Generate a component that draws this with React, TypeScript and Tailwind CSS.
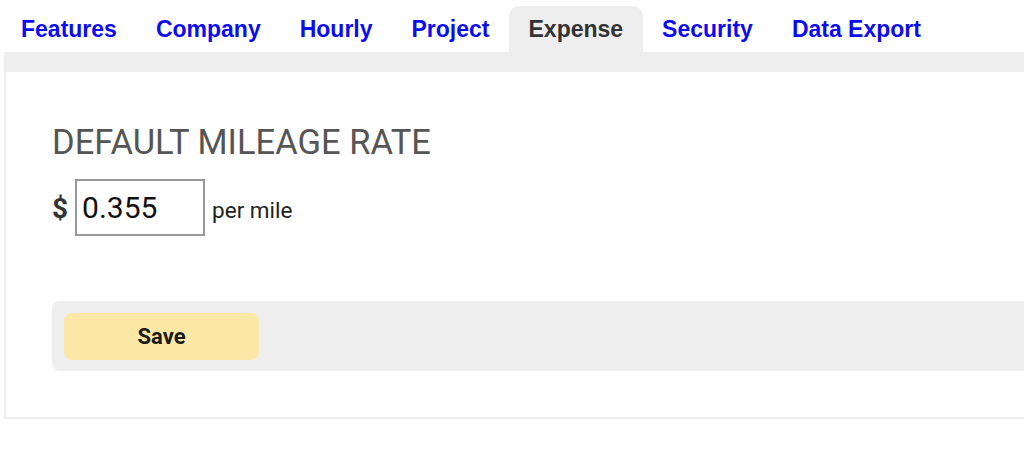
import React from "react";

const tabs = ["Features", "Company", "Hourly", "Project", "Expense", "Security", "Data Export"];

export default function App() {
  return (
    <div className="w-full h-[465px] bg-white overflow-hidden" style={{ fontFamily: "Roboto, 'Liberation Sans', sans-serif" }}>
      <div className="flex pt-[6px] pl-[1.5px]">
        {tabs.map((t) => (
          <div
            key={t}
            className={
              t === "Expense"
                ? "h-[46px] flex items-center px-[19.5px] rounded-t-[10px] bg-[#eeeeee] text-[#333333] font-bold text-[23px] font-['Liberation_Sans',Arial,sans-serif] leading-none"
                : "h-[46px] flex items-center px-[19.5px] text-[#0c0cf2] font-bold text-[23px] font-['Liberation_Sans',Arial,sans-serif] leading-none"
            }
          >
            {t}
          </div>
        ))}
      </div>
      <div className="ml-[4px] w-[1100px] border-2 border-t-[20px] border-[#eeeeee] pl-[46px] pt-[51px] pb-[46px]">
        <h2 className="text-[34.5px] leading-[39px] font-normal text-[#555555]">DEFAULT MILEAGE RATE</h2>
        <div className="flex items-baseline mt-[17px]">
          <span className="text-[28px] font-bold text-[#333333]">$</span>
          <input
            defaultValue="0.355"
            className="ml-[7px] w-[130px] h-[57px] border-2 border-[#999999] pl-[5px] text-[30px] text-[#111111] outline-none"
            style={{ fontFamily: "Roboto, sans-serif" }}
          />
          <span className="ml-[7px] text-[22.5px] text-[#222222]">per mile</span>
        </div>
        <div className="mt-[65px] h-[70px] bg-[#eeeeee] rounded-l-[8px] pl-[12px] pt-[12px]">
          <button className="w-[195px] h-[47px] rounded-[8px] bg-[#fce8a6] text-[22px] font-bold text-[#1a1a1a]" style={{ fontFamily: "Roboto, sans-serif" }}>
            Save
          </button>
        </div>
      </div>
    </div>
  );
}
